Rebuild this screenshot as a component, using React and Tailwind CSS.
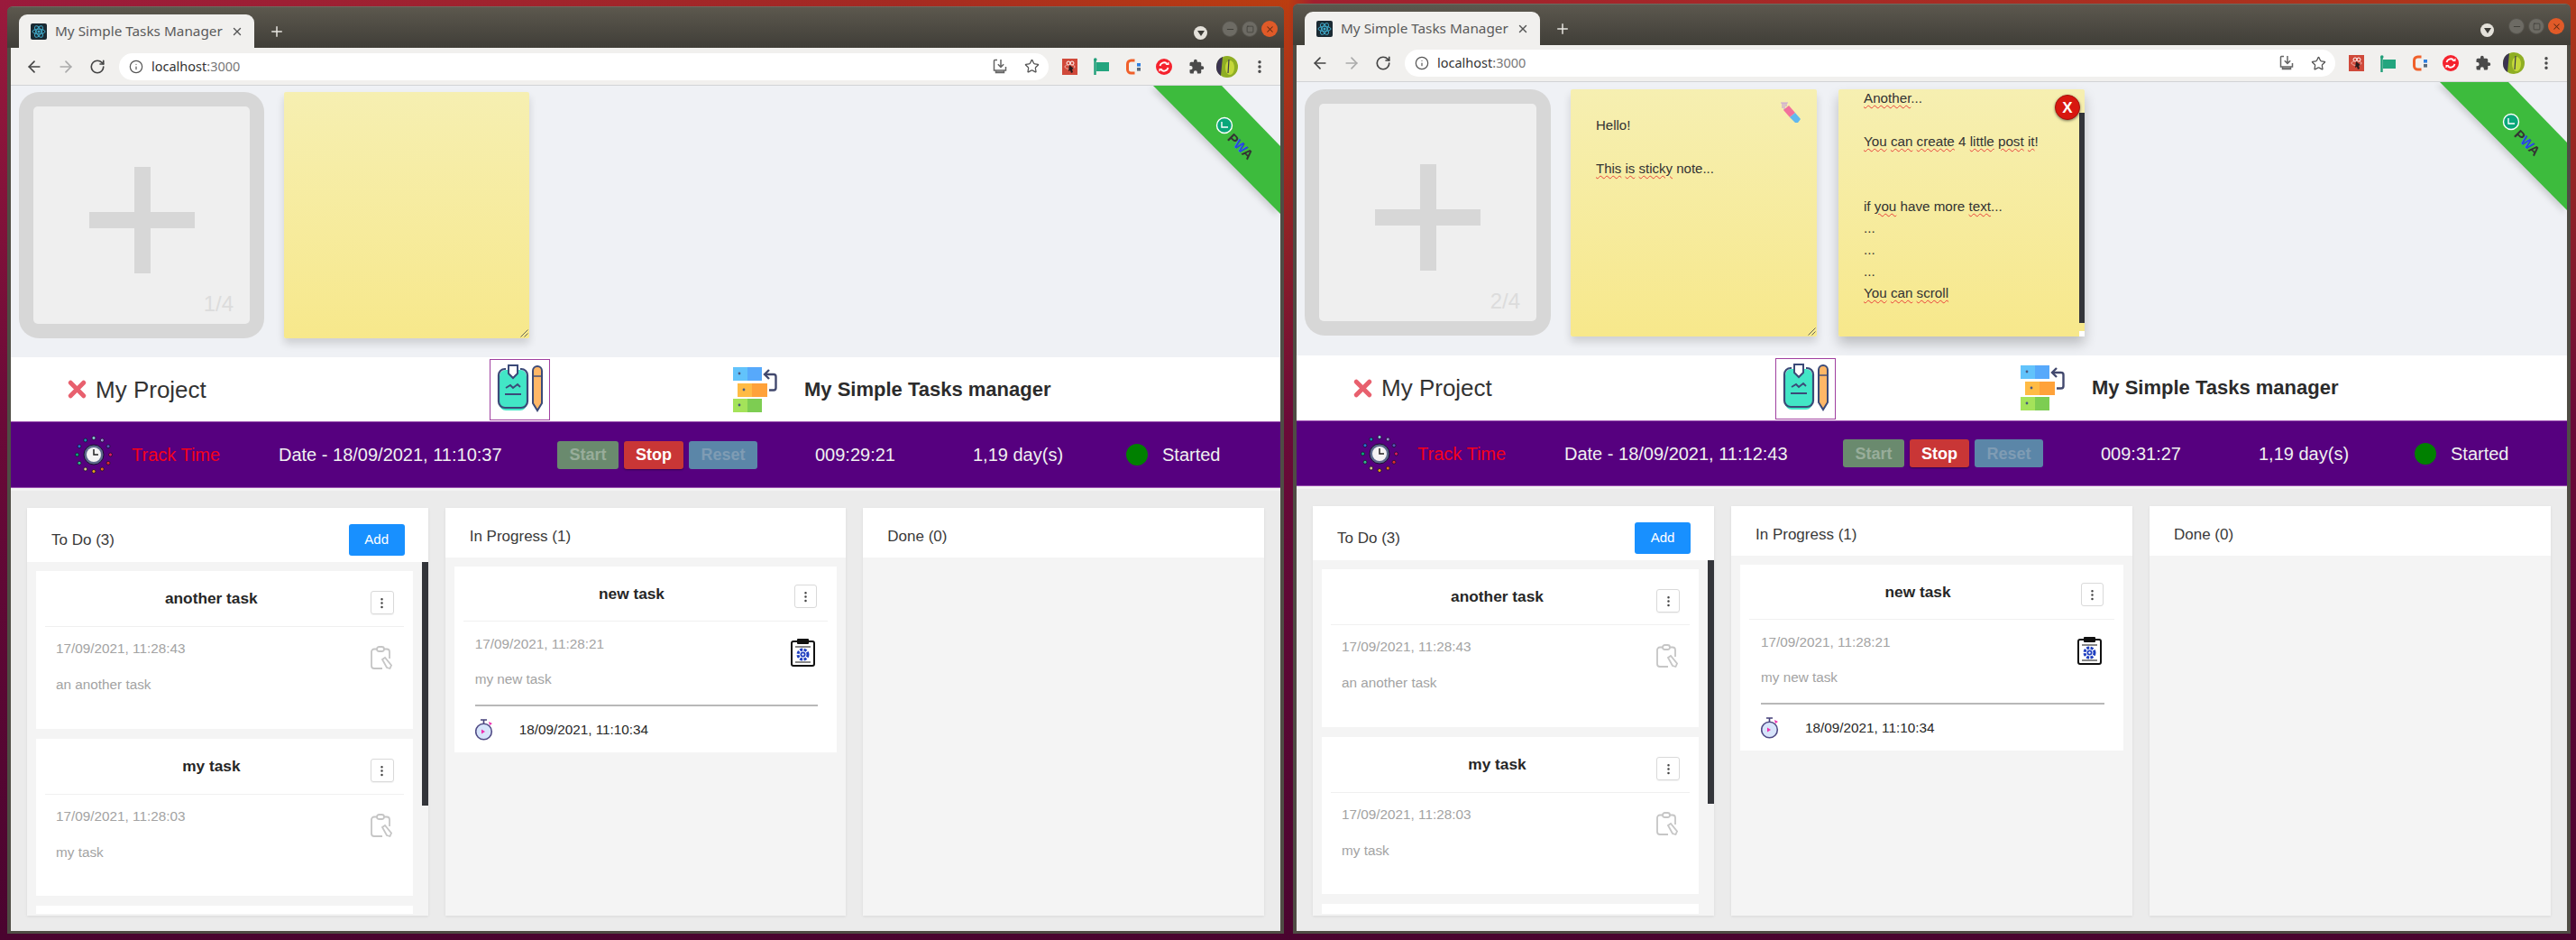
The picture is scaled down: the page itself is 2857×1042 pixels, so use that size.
import React from "react";
import { ArrowLeft, ArrowRight, RotateCw, Info, Star, EllipsisVertical, X, Plus, Minus, Square } from "lucide-react";

const todo = [
  { title: "another task", date: "17/09/2021, 11:28:43", text: "an another task" },
  { title: "my task", date: "17/09/2021, 11:28:03", text: "my task" },
  { title: "", date: "", text: "" },
];

// red squiggle like the browser spell checker
const Sp = ({ children }) => (
  <span className="underline decoration-wavy decoration-[#e8403a] decoration-1 underline-offset-2">{children}</span>
);

const Favicon = () => (
  <svg width="18" height="18" viewBox="0 0 18 18" className="shrink-0">
    <rect width="18" height="18" rx="2" fill="#1b2a33" />
    <g fill="none" stroke="#3fa9c9" strokeWidth="1">
      <ellipse cx="9" cy="9" rx="7" ry="2.8" />
      <ellipse cx="9" cy="9" rx="7" ry="2.8" transform="rotate(60 9 9)" />
      <ellipse cx="9" cy="9" rx="7" ry="2.8" transform="rotate(120 9 9)" />
    </g>
    <circle cx="9" cy="9" r="1.5" fill="#3fa9c9" />
  </svg>
);

const InstallIcon = () => (
  <svg width="16" height="18" viewBox="0 0 16 18" fill="none" stroke="#666" strokeWidth="1.5">
    <path d="M5 1.5H2.5a1 1 0 0 0-1 1V13h13V9" />
    <path d="M9 1v8M5.8 6.2 9 9.4l3.2-3.2" />
    <path d="M3.5 13.2v2.3h9v-2.3" fill="#888" />
  </svg>
);

const Extensions = () => (
  <div className="flex items-center">
    <svg width="17" height="18" viewBox="0 0 17 18" className="mr-[18px]">
      <rect width="17" height="18" fill="#d0493a" />
      <circle cx="7" cy="5" r="2" fill="none" stroke="#fff" strokeWidth="1" />
      <circle cx="11" cy="5" r="2" fill="none" stroke="#fff" strokeWidth="1" />
      <ellipse cx="8.5" cy="9" rx="5.5" ry="2.5" fill="none" stroke="#f2b5ac" strokeWidth="1" />
      <path d="M8 7l5 4-2 1 1 3-2 1-1-3-2 1z" fill="#2a1c1c" />
    </svg>
    <svg width="17" height="19" viewBox="0 0 17 19" className="mr-[18px]">
      <path d="M1.5 2v17" stroke="#1f9e78" strokeWidth="2.4" />
      <circle cx="1.8" cy="2" r="1.8" fill="#1f9e78" />
      <path d="M3 5h14v10H3z" fill="#23a57e" />
    </svg>
    <svg width="18" height="18" viewBox="0 0 18 18" className="mr-[16px]">
      <path d="M10.5 2H6.5A4 4 0 0 0 2.5 6v6a4 4 0 0 0 4 4h4" fill="none" stroke="#f0602a" strokeWidth="3" />
      <rect x="13" y="5" width="4" height="3.6" fill="#2d7fe0" />
      <rect x="13" y="10" width="4" height="3.6" fill="#5a6a7a" />
    </svg>
    <svg width="18" height="18" viewBox="0 0 18 18" className="mr-[18px]">
      <circle cx="9" cy="9" r="9" fill="#f5222d" />
      <path d="M4.5 8a4.6 4.6 0 0 1 7.6-2.5M13.5 10a4.6 4.6 0 0 1-7.6 2.5" fill="none" stroke="#fff" strokeWidth="1.8" />
      <path d="M10.5 7h4V3.5zM7.5 11h-4v3.5z" fill="#fff" />
    </svg>
    <svg width="18" height="18" viewBox="0 0 24 24" fill="#4a4a4a" className="mr-[13px]">
      <path d="M20.5 11H19V7a2 2 0 0 0-2-2h-4V3.5a2.5 2.5 0 0 0-5 0V5H4a2 2 0 0 0-2 2v3.8h1.5a2.7 2.7 0 0 1 0 5.4H2V20a2 2 0 0 0 2 2h3.8v-1.5a2.7 2.7 0 0 1 5.4 0V22H17a2 2 0 0 0 2-2v-4h1.5a2.5 2.5 0 0 0 0-5z" />
    </svg>
    <svg width="24" height="24" viewBox="0 0 24 24" className="mr-[15px]">
      <circle cx="12" cy="12" r="12" fill="#8fae24" />
      <path d="M0 12A12 12 0 0 1 7 1L5 22A12 12 0 0 1 0 12z" fill="#3b3350" />
      <ellipse cx="15" cy="13" rx="5" ry="8" fill="#c4d83a" />
      <path d="M14 4l-1 15" stroke="#3a3a48" strokeWidth="1.2" />
    </svg>
    <EllipsisVertical size={18} strokeWidth={2.6} className="text-[#444]" />
  </div>
);

const TitleButtons = () => (
  <div className="flex items-start">
    <div className="w-[15px] h-[15px] mt-[21px] mr-[16px] rounded-full bg-[#e4e1da] flex items-center justify-center">
      <div className="border-x-[4px] border-x-transparent border-t-[6px] border-t-[#3d3c37]" />
    </div>
    <div className="flex gap-[4px] mt-[15px]">
      <div className="w-[18px] h-[18px] rounded-full bg-[#6d6b64] border border-[#55534c] flex items-center justify-center">
        <Minus size={11} className="text-[#3d3c37]" />
      </div>
      <div className="w-[18px] h-[18px] rounded-full bg-[#6d6b64] border border-[#55534c] flex items-center justify-center">
        <Square size={9} className="text-[#3d3c37]" />
      </div>
      <div className="w-[18px] h-[18px] rounded-full bg-[#e05a28] flex items-center justify-center">
        <X size={11} strokeWidth={2.2} className="text-[#5c2a14]" />
      </div>
    </div>
  </div>
);

const AddCard = ({ count, wide }) => (
  <div
    className={`${wide ? "w-[273px]" : "w-[272px]"} h-[273px] shrink-0 rounded-[22px] bg-[#d7d7d7] p-[16px] flex`}
  >
    <div className="relative flex-1 rounded-[5px] bg-[#efefef] flex items-center justify-center">
      <svg width="117" height="118" viewBox="0 0 117 118" fill="#d7d7d7" className="mt-[10px]">
        <rect x="50" width="18" height="118" />
        <rect y="50" width="117" height="18" />
      </svg>
      <span className="absolute right-[18px] bottom-[8px] text-[24px] leading-[28px] text-[#dcdcdc]">{count}</span>
    </div>
  </div>
);

const Grip = () => (
  <svg width="9" height="9" viewBox="0 0 9 9" className="absolute right-[1px] bottom-[1px]" stroke="#555" strokeWidth="0.9">
    <path d="M0.5 8.5 8.5 0.5M4.5 8.5 8.5 4.5" />
  </svg>
);

const Eraser = () => (
  <svg width="24" height="24" viewBox="0 0 24 24" className="absolute top-[14px] right-[17px]">
    <path d="M1 1h8M3 1v6M7 1v4M5 1v8" stroke="#c9a3d6" strokeWidth="1.2" fill="none" />
    <path d="M4 9l6-5 7 8-6 5z" fill="#f2709c" />
    <path d="M11 17l6-5 6 7-3 4h-3z" fill="#62b8ee" />
  </svg>
);

const EmptyNote = () => (
  <div className="relative w-[272px] h-[273px] shrink-0 rounded-[2px] bg-linear-to-b from-[#f6efb1] to-[#f7e88b] shadow-[0_6px_10px_rgba(0,0,0,0.14)]">
    <Grip />
  </div>
);

const HelloNote = () => (
  <div className="relative w-[273px] h-[274px] shrink-0 rounded-[2px] bg-linear-to-b from-[#f6efb1] to-[#f7e88b] shadow-[0_6px_10px_rgba(0,0,0,0.14)] pl-[28px] pt-[28px] text-[15px] leading-[24px] text-[#333]">
    <Eraser />
    <div>Hello!</div>
    <div className="h-[24px]" />
    <div>
      <Sp>This</Sp> <Sp>is</Sp> <Sp>sticky</Sp> note...
    </div>
    <Grip />
  </div>
);

const ScrollNote = () => (
  <div className="relative ml-[2px] w-[273px] h-[274px] shrink-0 rounded-[2px] bg-linear-to-b from-[#f6efb1] to-[#f7e88b] shadow-[0_8px_14px_rgba(0,0,0,0.22)] pl-[28px] text-[15.2px] leading-[24px] text-[#333]">
    <div className="-mt-[2px]">
      <Sp>Another</Sp>...
    </div>
    <div className="h-[24px]" />
    <div>
      <Sp>You</Sp> <Sp>can</Sp> <Sp>create</Sp> 4 <Sp>little</Sp> <Sp>post</Sp> <Sp>it</Sp>!
    </div>
    <div className="h-[48px]" />
    <div>
      if <Sp>you</Sp> have more <Sp>text</Sp>...
    </div>
    <div>...</div>
    <div>...</div>
    <div>...</div>
    <div>
      <Sp>You</Sp> <Sp>can</Sp> <Sp>scroll</Sp>
    </div>
    <div className="absolute right-0 top-[26px] w-[6px] h-[233px] bg-[#33353a]" />
    <div className="absolute right-0 bottom-0 w-[6px] h-[6px] bg-white" />
    <div className="absolute right-[5px] top-[6px] w-[28px] h-[28px] rounded-full bg-[#d8170f] border border-[#a8120c] shadow-[0_1px_3px_rgba(0,0,0,0.5)] flex items-center justify-center text-white font-bold text-[17px] leading-none">
      X
    </div>
  </div>
);

const ClipLogo = () => (
  <svg width="65" height="66" viewBox="0 0 65 66">
    <rect x="10" y="11" width="30" height="45" rx="7" fill="#42e6c6" />
    <path d="M17 10h-1a7 7 0 0 0-7 7v29a7 7 0 0 0 7 7h18a7 7 0 0 0 7-7V17a7 7 0 0 0-7-7h-1" fill="none" stroke="#3b4a78" strokeWidth="2.2" />
    <path d="M20 6h10v9l-5 5-5-5z" fill="#fff" stroke="#3b4a78" strokeWidth="2" />
    <path d="M17 31l5-3 3 3 5-4 3 3" fill="none" stroke="#3b4a78" strokeWidth="1.8" />
    <path d="M16 38h18" stroke="#3b4a78" strokeWidth="2" />
    <path d="M47 12a5 5 0 0 1 10 0v36l-5 8-5-8z" fill="#ffb767" stroke="#3b4a78" strokeWidth="2" />
    <path d="M47 18h10" stroke="#3b4a78" strokeWidth="1.4" />
  </svg>
);

const BarsLogo = () => (
  <svg width="50" height="50" viewBox="0 0 50 50" className="shrink-0">
    <rect width="16" height="15" fill="#62c3fb" />
    <rect x="16" width="16" height="15" fill="#57a9fb" />
    <rect x="5" y="18" width="16" height="15" fill="#ffbb45" />
    <rect x="21" y="18" width="17" height="15" fill="#ffa23a" />
    <rect y="35" width="16" height="15" fill="#a4e35a" />
    <rect x="16" y="35" width="16" height="15" fill="#7dcd52" />
    <circle cx="7" cy="7" r="1.4" fill="#4b5a80" />
    <circle cx="12" cy="25" r="1.4" fill="#4b5a80" />
    <circle cx="7" cy="42" r="1.4" fill="#4b5a80" />
    <path d="M36 8h9a2.5 2.5 0 0 1 2.5 2.5V23a2.5 2.5 0 0 1-2.5 2.5h-5" fill="none" stroke="#42496e" strokeWidth="2.4" />
    <path d="M40 3l-5 5 5 5" fill="none" stroke="#42496e" strokeWidth="2.4" />
  </svg>
);

const ClockLogo = () => {
  const colors = ["#8fc7d8", "#9a8fd0", "#5a55b8", "#e0195f", "#e02b2b", "#e8661a", "#e8a01a", "#d8c08a", "#35b88a", "#0aa77a", "#2a70d0", "#1a8ab0"];
  return (
    <svg width="42" height="42" viewBox="0 0 42 42" className="shrink-0">
      {colors.map((c, i) => {
        const a = (i * 30 - 90) * (Math.PI / 180);
        return <circle key={i} cx={21 + 18.5 * Math.cos(a)} cy={21 + 18.5 * Math.sin(a)} r="2" fill={c} stroke="#1a1030" strokeWidth="0.8" />;
      })}
      <circle cx="21" cy="21" r="11" fill="#5c6a8c" stroke="#1a1030" strokeWidth="1" />
      <circle cx="21" cy="21" r="8" fill="#f4f4f4" />
      <path d="M21 15v6h5" fill="none" stroke="#222" strokeWidth="1.5" />
    </svg>
  );
};

const TaskIcon = () => (
  <svg width="24" height="27" viewBox="0 0 24 27" fill="none" stroke="#c6c6c6" strokeWidth="1.8" className="shrink-0">
    <path d="M7 3.5H4a3 3 0 0 0-3 3V22a3 3 0 0 0 3 3h9M15 3.5h3a3 3 0 0 1 3 3V14" />
    <rect x="7" y="1" width="8" height="5" rx="2.5" />
    <path d="M13 15l3-2 7 8.5-1.5 3.5-3.5-1z" />
  </svg>
);

const GearClipboard = () => (
  <svg width="29" height="32" viewBox="0 0 29 32" fill="none" className="shrink-0">
    <rect x="2" y="4" width="25" height="27" rx="2" stroke="#111" strokeWidth="2" fill="#fff" />
    <rect x="8" y="1" width="13" height="6" rx="1" fill="#111" />
    <path d="M6 10h17M6 27h17" stroke="#111" strokeWidth="1" />
    <circle cx="14.5" cy="18.5" r="5.5" stroke="#1f3fc0" strokeWidth="3" strokeDasharray="3 1.4" />
    <circle cx="14.5" cy="18.5" r="3" fill="#1f3fc0" />
    <circle cx="14.5" cy="18.5" r="1.2" fill="#fff" />
  </svg>
);

const TimerIcon = () => (
  <svg width="20" height="24" viewBox="0 0 20 24" className="shrink-0">
    <path d="M6 1h7M9.5 1v4" stroke="#45407a" strokeWidth="1.6" />
    <circle cx="9.5" cy="14" r="8.8" fill="#d7e4fb" stroke="#514c86" strokeWidth="1.6" />
    <path d="M7 11.5v5l4-2.5z" fill="#ee2fb0" />
    <path d="M15 3l4 2-3 2z" fill="#ee2fb0" />
  </svg>
);

const TaskCard = ({ task, tall }) => (
  <div className={`${tall ? "h-[175px]" : "h-[174px]"} shrink-0 bg-white px-[10px] pt-[22px]`}>
    <div className="flex items-start border-b border-[#f0f0f0] h-[39px] box-content pb-0">
      <div className="flex-1 pl-[8px] -mt-[8px] text-center font-bold text-[17.3px] leading-[32px] text-[#262626]">{task.title}</div>
      <div className="mr-[11px] w-[26px] h-[26px] rounded-[3px] border border-[#d9d9d9] shadow-[0_1px_1px_rgba(0,0,0,0.05)] flex items-center justify-center">
        <EllipsisVertical size={15} className="text-[#444]" />
      </div>
    </div>
    <div className="flex justify-between pl-[12px] pr-[13px] pt-[21px]">
      <div className="text-[15.3px] leading-[20px] text-[#a3a3a3]">
        <div className="-mt-[7px]">{task.date}</div>
        <div className="mt-[20px]">{task.text}</div>
      </div>
      <TaskIcon />
    </div>
  </div>
);

const InProgressCard = () => (
  <div className="mx-[10px] mt-[10px] h-[206px] bg-white px-[10px] pt-[20px]">
    <div className="flex items-start border-b border-[#f0f0f0] h-[41px]">
      <div className="flex-1 pl-[6px] -mt-[6px] text-center font-bold text-[17.3px] leading-[32px] text-[#262626]">new task</div>
      <div className="mr-[12px] w-[25px] h-[26px] rounded-[3px] border border-[#d9d9d9] flex items-center justify-center">
        <EllipsisVertical size={15} className="text-[#444]" />
      </div>
    </div>
    <div className="pl-[13px] pr-[11px]">
      <div className="flex justify-between items-start">
        <div className="text-[15.3px] leading-[20px] text-[#a3a3a3] pt-[15px]">
          <div>17/09/2021, 11:28:21</div>
          <div className="mt-[19px]">my new task</div>
        </div>
        <div className="mt-[18px] mr-[2px]">
          <GearClipboard />
        </div>
      </div>
      <div className="mt-[18px] h-[2px] bg-[#b8b8b8]" />
      <div className="mt-[14px] flex items-center gap-[29px]">
        <TimerIcon />
        <span className="text-[15.3px] leading-[24px] text-[#262626]">18/09/2021, 11:10:34</span>
      </div>
    </div>
  </div>
);

const Ribbon = () => (
  <div className="absolute top-0 right-0 w-[151px] h-[152px] overflow-hidden">
    <svg width="151" height="152" viewBox="0 0 151 152" className="absolute inset-0">
      <path d="M10 0H86L151 67V142z" fill="#3dbb3d" className="drop-shadow-[-3px_3px_3px_rgba(0,0,0,0.14)]" />
      <circle cx="89" cy="44" r="8.5" fill="#0aa77a" stroke="#fff" strokeWidth="1.4" />
      <path d="M86 40v6h7" fill="none" stroke="#fff" strokeWidth="1.4" />
    </svg>
    <span className="absolute left-[107px] top-[67px] -translate-x-1/2 -translate-y-1/2 rotate-45 font-bold text-[15px] leading-none text-[#333] tracking-[-0.5px]">
      P<span className="text-[#2a45e8]">W</span>A
    </span>
  </div>
);

const BrowserWindow = ({ outer, toolbar, notes, header, purple, logoGap, daysCell, count, dateText, timer, days, children }) => (
  <div className={`${outer} shrink-0 flex flex-col rounded-t-[6px] bg-[#4f4c44] px-[4px] pb-[3px] border-t border-[#6e6a60]`}>
    {/* title bar with the tab */}
    <div className="h-[45px] -mx-[4px] px-[13px] rounded-t-[6px] bg-linear-to-b from-[#5c584e] to-[#403e38] flex justify-between items-end pr-[7px] shrink-0">
      <div className="flex items-center">
        <div className="w-[261px] h-[37px] rounded-t-[9px] bg-[#f1f0ee] flex items-center pl-[13px] pr-[12px] gap-[9px]">
          <Favicon />
          <span className="flex-1 whitespace-nowrap text-[15.3px] text-[#5a5a5a] font-['Noto_Sans',sans-serif]">My Simple Tasks Manager</span>
          <X size={14} strokeWidth={2.4} className="text-[#555]" />
        </div>
        <Plus size={18} strokeWidth={2} className="ml-[16px] text-[#e8e6e1]" />
      </div>
      <div className="self-start">
        <TitleButtons />
      </div>
    </div>

    {/* toolbar */}
    <div className={`${toolbar} shrink-0 bg-[#f1f0ee] border-b border-[#d2d3d6] flex items-center pl-[16px] pr-[14px] box-content`}>
      <ArrowLeft size={20} strokeWidth={2} className="text-[#444]" />
      <ArrowRight size={20} strokeWidth={2} className="ml-[15px] text-[#aaa]" />
      <RotateCw size={18} strokeWidth={2.2} className="ml-[16px] text-[#444]" />
      <div className="ml-[15px] flex-1 h-[30px] rounded-full bg-white flex items-center pl-[11px] pr-[10px]">
        <Info size={16} strokeWidth={1.8} className="text-[#555]" />
        <span className="ml-[9px] text-[14.5px] text-[#333] font-['Noto_Sans',sans-serif]">
          localhost<span className="text-[#777]">:3000</span>
        </span>
        <div className="ml-auto flex items-center gap-[19px]">
          <InstallIcon />
          <Star size={17} strokeWidth={1.8} className="text-[#555]" />
        </div>
      </div>
      <div className="ml-[15px]">
        <Extensions />
      </div>
    </div>

    {/* page */}
    <div className="relative flex-1 min-h-0 flex flex-col bg-[#eff1f5] font-['Liberation_Sans',sans-serif]">
      <Ribbon />
      <div className={`${notes} pl-[9px] flex gap-[22px] shrink-0`}>
        <AddCard count={count} wide={count === "2/4"} />
        {children}
      </div>

      <div className={`${header} shrink-0 bg-white flex items-center`}>
        <div className="w-[531px] pl-[59px] flex items-center gap-[6px] shrink-0">
          <X size={29} strokeWidth={4.2} className="text-[#e8606e]" />
          <span className="text-[26px] leading-[34px] text-[#333]">My Project</span>
        </div>
        <div className="w-[67px] h-[68px] border border-[#a040a0] flex items-center justify-center shrink-0 -mb-[1px]">
          <ClipLogo />
        </div>
        <div className={logoGap}>
          <BarsLogo />
        </div>
        <span className="ml-[29px] font-bold text-[22px] leading-[30px] text-[#2b2b2b]">My Simple Tasks manager</span>
      </div>

      <div className={`${purple} shrink-0 bg-[#56007f] border-y border-[#9a4fb0] flex items-center text-[20px] leading-[26px] text-[#f0f0f0]`}>
        <div className="w-[134px] pl-[71px] shrink-0">
          <ClockLogo />
        </div>
        <div className="w-[163px] shrink-0 text-[#f5001a]">Track Time</div>
        <div className="w-[309px] shrink-0">{dateText}</div>
        <div className="flex gap-[6px] shrink-0 font-bold text-[18px]">
          <div className="w-[68px] h-[31px] rounded-[3px] bg-[#6a8a6e] text-[#98ad9a] flex items-center justify-center">Start</div>
          <div className="w-[66px] h-[31px] rounded-[3px] bg-[#c93636] text-white flex items-center justify-center shadow-[0_1px_2px_rgba(0,0,0,0.4)]">Stop</div>
          <div className="w-[76px] h-[31px] rounded-[3px] bg-[#5b86a8] text-[#7f9cb4] flex items-center justify-center">Reset</div>
        </div>
        <div className="ml-[64px] w-[175px] shrink-0">{timer}</div>
        <div className={`${daysCell} shrink-0`}>{days}</div>
        <div className="w-[24px] h-[24px] rounded-full bg-[#008000] shrink-0" />
        <div className="ml-[16px]">Started</div>
      </div>

      {/* board */}
      <div className="flex-1 min-h-0 bg-[#ebebeb] border-t-[3px] border-[#f3f3f3] pt-[19px] pb-[17px] px-[18px] grid grid-cols-3 gap-[19px] text-[17px] text-[#3a3a3a]">
        <div className="relative min-h-0 flex flex-col bg-[#f4f4f4] shadow-[0_1px_3px_rgba(0,0,0,0.08)] overflow-hidden">
          <div className="h-[60px] pt-[11px] shrink-0 bg-white flex items-center justify-between pl-[27px] pr-[26px]">
            <span>To Do (3)</span>
            <div className="w-[62px] h-[35px] rounded-[3px] bg-[#1890ff] text-white text-[15px] flex items-center justify-center">Add</div>
          </div>
          <div className="flex-1 min-h-0 overflow-hidden flex flex-col gap-[11px] pt-[10px] pl-[10px] pr-[17px] pb-[2px] mb-[2px]">
            {todo.map((t, i) => (
              <TaskCard key={i} task={t} tall={i === 0} />
            ))}
          </div>
          <div className="absolute top-[60px] right-0 w-[7px] h-[270px] bg-[#33353a]" />
        </div>

        <div className="min-h-0 flex flex-col bg-[#f4f4f4] shadow-[0_1px_3px_rgba(0,0,0,0.08)]">
          <div className="h-[55px] pt-[8px] shrink-0 bg-white flex items-center pl-[27px]">In Progress (1)</div>
          <InProgressCard />
        </div>

        <div className="min-h-0 flex flex-col bg-[#f4f4f4] shadow-[0_1px_3px_rgba(0,0,0,0.08)]">
          <div className="h-[55px] pt-[8px] shrink-0 bg-white flex items-center pl-[27px]">Done (0)</div>
        </div>
      </div>
    </div>
  </div>
);

export default function App() {
  return (
    <div className="w-[2857px] h-[1042px] overflow-hidden flex items-start bg-[linear-gradient(180deg,transparent_0%,#6a0a38_45%,#4a042f_100%),linear-gradient(90deg,#9a1a3c_0%,#a52a22_35%,#bb3d10_50%,#a02030_51%,#b03818_100%)]">
      <BrowserWindow
        outer="ml-[8px] mt-[7px] w-[1416px] h-[1028px]"
        toolbar="h-[41px]"
        notes="pt-[7px] h-[301px]"
        header="h-[71px]"
        purple="h-[74px]"
        logoGap="ml-[203px]"
        daysCell="w-[170px]"
        count="1/4"
        dateText="Date - 18/09/2021, 11:10:37"
        timer="009:29:21"
        days="1,19 day(s)"
      >
        <EmptyNote />
      </BrowserWindow>
      <BrowserWindow
        outer="ml-[10px] mt-[4px] w-[1417px] h-[1031px]"
        toolbar="h-[40px]"
        notes="pt-[8px] h-[303px]"
        header="h-[72px]"
        purple="h-[73px]"
        logoGap="ml-[205px]"
        daysCell="w-[173px]"
        count="2/4"
        dateText="Date - 18/09/2021, 11:12:43"
        timer="009:31:27"
        days="1,19 day(s)"
      >
        <HelloNote />
        <ScrollNote />
      </BrowserWindow>
    </div>
  );
}
